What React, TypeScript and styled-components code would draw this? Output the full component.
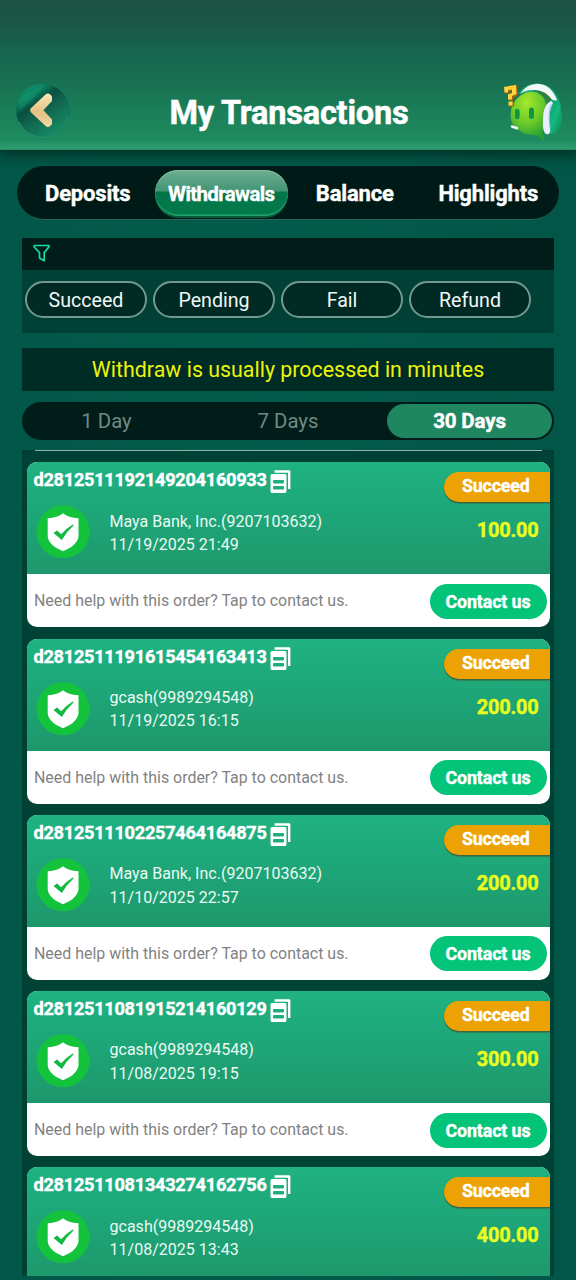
import React from 'react';
import styled, { createGlobalStyle } from 'styled-components';

const GlobalStyle = createGlobalStyle`
  * { box-sizing: border-box; }
  body { margin: 0; background: #025849; }
  button { font: inherit; border: 0; padding: 0; margin: 0; background: none; color: inherit; }
`;

const Screen = styled.div`
  width: 576px;
  height: 1280px;
  overflow: hidden;
  display: flex;
  flex-direction: column;
  background: linear-gradient(90deg, #025848 0, #025b4a 50%, #025647 100%);
  font-family: Roboto, 'Liberation Sans', sans-serif;
  color: #fff;
  white-space: nowrap;
`;

const Header = styled.header`
  flex: none;
  height: 150px;
  padding: 75px 13px 0 15px;
  display: flex;
  align-items: flex-start;
  justify-content: space-between;
  background: linear-gradient(#1b5244 0, #1a5546 20px, #17694f 60px, #187353 88px, #1d855c 125px, #1f8a60 140px, #2e9c70 148px, #258a64 150px);
  box-shadow: 0 3px 13px 2px #002e23;
`;

const Title = styled.h1`
  margin: 18px 0 0;
  font-size: 32.5px;
  line-height: 40px;
  font-weight: 700;
  letter-spacing: -0.2px;
  -webkit-text-stroke: 0.5px currentColor;
`;

const IconButton = styled.button`
  width: 60px;
  height: 68px;
  display: block;
  svg { display: block; }
`;

const Main = styled.main`
  flex: none;
  height: 1126px;
  padding: 16px 17px 0;
  display: flex;
  flex-direction: column;
  overflow: hidden;
`;

const Tabs = styled.nav`
  flex: none;
  height: 54px;
  padding: 4px 4px 3px;
  display: grid;
  grid-template-columns: repeat(4, 1fr);
  border-radius: 27px;
  background: #001b17;
  border-bottom: 1px solid #28655a;
`;

const Tab = styled.button<{ $active?: boolean }>`
  height: 46px;
  padding-top: 1px;
  border-radius: 23px;
  font-size: ${p => (p.$active ? 20.5 : 22)}px;
  font-weight: 700;
  letter-spacing: ${p => (p.$active ? -0.65 : -0.18)}px;
  -webkit-text-stroke: 0.4px currentColor;
  ${p => p.$active && `
    background: linear-gradient(#6dae92 0, #439476 21px, #02754a 22px, #027a4b 100%);
    box-shadow: inset 0 -1.5px 1px #25a56f, inset 0 1px 1px #85bca4, 0 2px 0 #075b3a;
  `}
`;

const Body = styled.div`
  flex: none;
  width: 532px;
  margin: 18px 0 0 5px;
  display: flex;
  flex-direction: column;
`;

const FilterPanel = styled.section`
  height: 95px;
  background: #014034;
`;

const FilterHead = styled.div`
  height: 32px;
  padding: 5.5px 11px;
  background: #001d19;
  svg { display: block; }
`;

const Pills = styled.div`
  display: flex;
  gap: 6px;
  padding: 11px 3px;
`;

const Pill = styled.button`
  width: 122px;
  height: 37px;
  padding-top: 1px;
  border: 2px solid #71998f;
  border-radius: 19px;
  background: #002a23;
  color: #f2f8f6;
  font-size: 19.6px;
`;

const Notice = styled.div`
  height: 43px;
  margin-top: 15px;
  background: #002c26;
  color: #edf40a;
  font-size: 21.4px;
  line-height: 44px;
  text-align: center;
`;

const Ranges = styled.nav`
  height: 38px;
  margin-top: 11px;
  padding: 2px;
  border-radius: 19px;
  background: #001d19;
  display: grid;
  grid-template-columns: 165px 198px 165px;
`;

const Range = styled.button<{ $active?: boolean }>`
  border-radius: 17px;
  font-size: ${p => (p.$active ? 20.6 : 20.4)}px;
  font-weight: ${p => (p.$active ? 700 : 400)};
  color: ${p => (p.$active ? '#fff' : '#718985')};
  background: ${p => (p.$active ? '#1f875f' : 'transparent')};
  -webkit-text-stroke: ${p => (p.$active ? '0.4px' : '0')} currentColor;
  letter-spacing: ${p => (p.$active ? '-0.2px' : '0')};
`;

const List = styled.section`
  margin-top: 10px;
  padding: 0 4.5px;
  background: #004236;
  box-shadow: inset 0 0 4px #003a30;
  display: flex;
  flex-direction: column;
  gap: 11.3px;
`;

const ListEdge = styled.div`
  flex: none;
  height: 1px;
  margin: 0 8px;
  background: #8fb8aa;
`;

const Card = styled.article`
  flex: none;
  height: 165px;
  border-radius: 10px;
  overflow: hidden;
  background: #fff;
`;

const CardTop = styled.div`
  height: 112px;
  padding-left: 7px;
  display: grid;
  grid-template-columns: 1fr 106px;
  background: linear-gradient(#1fb282, #1d986c);
`;

const OrderNo = styled.div`
  height: 38px;
  padding-top: 8px;
  display: flex;
  align-items: flex-start;
  gap: 3px;
  font-size: 18.2px;
  line-height: 19.5px;
  font-weight: 700;
  letter-spacing: -0.29px;
  -webkit-text-stroke: 0.4px currentColor;
  svg { display: block; }
`;

const Payment = styled.div`
  display: flex;
  padding-left: 2px;
  svg { display: block; margin-top: 4px; }
`;

const Detail = styled.div`
  margin: 9.3px 0 0 20px;
  font-size: 16.05px;
  line-height: 23.5px;
  color: #eafaf4;
`;

const Side = styled.div`
  display: flex;
  flex-direction: column;
  align-items: stretch;
`;

const Status = styled.div`
  height: 30px;
  margin-top: 10px;
  padding-left: 18.5px;
  border-radius: 15px 0 0 15px;
  background: #eca203;
  box-shadow: 0 1.5px 1px #38663c;
  font-size: 17.8px;
  line-height: 28px;
  font-weight: 700;
  letter-spacing: -0.16px;
  -webkit-text-stroke: 0.4px currentColor;
`;

const Amount = styled.div`
  margin-top: 16px;
  padding-right: 11px;
  text-align: right;
  color: #eaff1c;
  font-size: 20px;
  line-height: 24px;
  font-weight: 700;
  letter-spacing: -0.25px;
  -webkit-text-stroke: 0.4px currentColor;
`;

const CardHelp = styled.div`
  height: 53px;
  padding: 1px 3px 0 7.5px;
  display: flex;
  align-items: center;
  justify-content: space-between;
  color: #828282;
  font-size: 15.95px;
  line-height: 20px;
`;

const Contact = styled.button`
  width: 117px;
  height: 35px;
  padding-top: 1px;
  border-radius: 18px;
  background: #03c478;
  color: #fff;
  font-size: 17.8px;
  font-weight: 700;
  letter-spacing: -0.1px;
  -webkit-text-stroke: 0.4px currentColor;
`;

const BackIcon = () => (
  <svg width="60" height="68" viewBox="0 0 60 68">
    <defs>
      <linearGradient id="orb" x1="0.1" y1="0" x2="0.8" y2="1">
        <stop offset="0" stopColor="#0fa577" />
        <stop offset="0.24" stopColor="#0a7c5b" />
        <stop offset="0.38" stopColor="#075040" />
        <stop offset="0.6" stopColor="#126950" />
        <stop offset="1" stopColor="#16916a" />
      </linearGradient>
      <linearGradient id="gold" x1="0" y1="0" x2="0" y2="1">
        <stop offset="0" stopColor="#f8e6b8" />
        <stop offset="0.55" stopColor="#e5c183" />
        <stop offset="1" stopColor="#f0d8a0" />
      </linearGradient>
    </defs>
    <circle cx="28" cy="36.3" r="27" fill="#0c5b43" opacity="0.35" />
    <circle cx="27.7" cy="35.3" r="26.5" fill="url(#orb)" />
    <path d="M4 25Q14 15 29 11Q21 23 5 35" fill="#20b588" opacity="0.25" />
    <path d="M4 47A26 26 0 0 0 53 43" fill="none" stroke="#2f9d77" strokeWidth="0.8" />
    <path d="M15.6 33.6L30.5 19.6Q33 17.5 35.5 19.7L37 21.3V26L28.4 35.2L37 44.5V49L35.2 51Q33 53 30.6 51L15.6 37Q14.7 35.3 15.6 33.6Z" fill="url(#gold)" />
  </svg>
);

const SupportIcon = () => (
  <svg width="60" height="68" viewBox="0 0 60 68">
    <defs>
      <radialGradient id="face" cx="0.45" cy="0.22" r="0.75">
        <stop offset="0" stopColor="#a6e82e" />
        <stop offset="0.55" stopColor="#6cca2a" />
        <stop offset="1" stopColor="#259f36" />
      </radialGradient>
      <linearGradient id="cup" x1="0" y1="0" x2="1" y2="1">
        <stop offset="0" stopColor="#0c9f70" />
        <stop offset="0.5" stopColor="#14b87d" />
        <stop offset="1" stopColor="#078558" />
      </linearGradient>
    </defs>
    <path d="M15 19Q22 8 35 8.5Q48 9 54 21Q58 28 58 34L45 29Q38 15 15 19Z" fill="#13ac79" />
    <path d="M7.5 40Q8 27 18 20Q29 13 39 21Q45 27 44 40Q44 50 39.5 56Q41.5 60 41 66.7Q37 62 32 60Q17 60 10.5 50Q7.5 46 7.5 40Z" fill="url(#face)" />
    <path d="M17 19Q24 8.6 35 8.8Q48 9.5 54 25L50 27Q43 15 31 15Q23 14.5 17 19Z" fill="#f5faf9" />
    <path d="M29 15.5Q42 14 50 26L45 28Q39 17 29 15.5Z" fill="#347f3c" />
    <path d="M46 25Q55 23 57.5 34Q61 47 56.5 54Q52 61 46 58Z" fill="url(#cup)" />
    <path d="M48.5 26Q40 29 40 45Q39 58 44 59.5Q48 59 47 53Q44.5 38 50 28Z" fill="#e9edff" />
    <path d="M48.5 29Q44.5 37 47 53" fill="none" stroke="#a5bfe7" strokeWidth="1" />
    <rect x="12" y="33.7" width="4.6" height="10.5" rx="2.3" fill="#119640" />
    <rect x="26" y="32.5" width="5" height="11.5" rx="2.5" fill="#119640" />
    <path d="M9 51.5L14 53.3" fill="none" stroke="#eef8ff" strokeWidth="2.5" strokeLinecap="round" />
    <g transform="translate(1 10)">
      <path d="M1 3L4 1L13 0L14 10L11 12L9 13V16L4 15V10L8 8V6L5 7V9L1 8ZM5 17H10V21L5 22Z" fill="#a96008" />
      <path d="M0 2L12 0L12.5 9L8 11V14.5H4V9.5L8 8V4.5L4 5V7.5H.5ZM4.5 16.5H8.5V20.5H4.5Z" fill="#ffd33b" />
    </g>
  </svg>
);

const FunnelIcon = () => (
  <svg width="18" height="20" viewBox="0 0 18 20" fill="none" stroke="#14dfa4" strokeWidth="1.7" strokeLinejoin="round">
    <path d="M1.2 1.5H15.8V3L11.2 8.6V16.7L6.5 14V8.6L1.2 3Z" />
  </svg>
);

const CopyIcon = () => (
  <svg width="21" height="24" viewBox="0 0 21 24">
    <path d="M4.5 1.5H19.2V19" fill="none" stroke="#fff" strokeWidth="2.4" strokeLinejoin="round" />
    <path fillRule="evenodd" d="M2 4H15Q16.5 4 16.5 5.5V21Q16.5 23 15 23H2Q.5 23 .5 21V5.5Q.5 4 2 4ZM4 10H13Q14 10 14 11.2V12.3Q14 13.5 13 13.5H4Q3 13.5 3 12.3V11.2Q3 10 4 10ZM4 16H13Q14 16 14 17V18.5Q14 19.5 13 19.5H4Q3 19.5 3 18.5V17Q3 16 4 16Z" fill="#fff" />
  </svg>
);

const ShieldIcon = () => (
  <svg width="54" height="54" viewBox="0 0 54 54">
    <circle cx="27" cy="27.8" r="26.5" fill="#14c33c" />
    <path d="M27 9.3Q32 14 42.5 14.2V32Q42 41 27 47.2Q12 41 11.7 32V14.2Q22 14 27 9.3Z" fill="#fff" />
    <path d="M17.5 29L21 26.5L25.3 30.2Q30 24.5 37.2 20.3L37.5 21.4Q30.5 27.5 25.8 36Z" fill="#14b944" />
  </svg>
);

const orders = [
  { id: 'd2812511192149204160933', account: 'Maya Bank, Inc.(9207103632)', date: '11/19/2025 21:49', amount: '100.00' },
  { id: 'd2812511191615454163413', account: 'gcash(9989294548)', date: '11/19/2025 16:15', amount: '200.00' },
  { id: 'd2812511102257464164875', account: 'Maya Bank, Inc.(9207103632)', date: '11/10/2025 22:57', amount: '200.00' },
  { id: 'd2812511081915214160129', account: 'gcash(9989294548)', date: '11/08/2025 19:15', amount: '300.00' },
  { id: 'd2812511081343274162756', account: 'gcash(9989294548)', date: '11/08/2025 13:43', amount: '400.00' },
];

export default function App() {
  return (
    <Screen>
      <GlobalStyle />
      <Header>
        <IconButton aria-label="Back"><BackIcon /></IconButton>
        <Title>My Transactions</Title>
        <IconButton aria-label="Support"><SupportIcon /></IconButton>
      </Header>
      <Main>
        <Tabs>
          <Tab>Deposits</Tab>
          <Tab $active>Withdrawals</Tab>
          <Tab>Balance</Tab>
          <Tab>Highlights</Tab>
        </Tabs>
        <Body>
          <FilterPanel>
            <FilterHead><FunnelIcon /></FilterHead>
            <Pills>
              {['Succeed', 'Pending', 'Fail', 'Refund'].map(s => <Pill key={s}>{s}</Pill>)}
            </Pills>
          </FilterPanel>
          <Notice>Withdraw is usually processed in minutes</Notice>
          <Ranges>
            <Range>1 Day</Range>
            <Range>7 Days</Range>
            <Range $active>30 Days</Range>
          </Ranges>
          <List>
            <ListEdge />
            {orders.map((o, i) => (
              <Card key={o.id}>
                <CardTop>
                  <div>
                    <OrderNo><span>{o.id}</span><CopyIcon /></OrderNo>
                    <Payment>
                      <ShieldIcon />
                      <Detail>
                        <div>{o.account}</div>
                        <div>{o.date}</div>
                      </Detail>
                    </Payment>
                  </div>
                  <Side>
                    <Status>Succeed</Status>
                    <Amount>{o.amount}</Amount>
                  </Side>
                </CardTop>
                {i < orders.length - 1 && (
                  <CardHelp>
                    <span>Need help with this order? Tap to contact us.</span>
                    <Contact>Contact us</Contact>
                  </CardHelp>
                )}
              </Card>
            ))}
          </List>
        </Body>
      </Main>
    </Screen>
  );
}
